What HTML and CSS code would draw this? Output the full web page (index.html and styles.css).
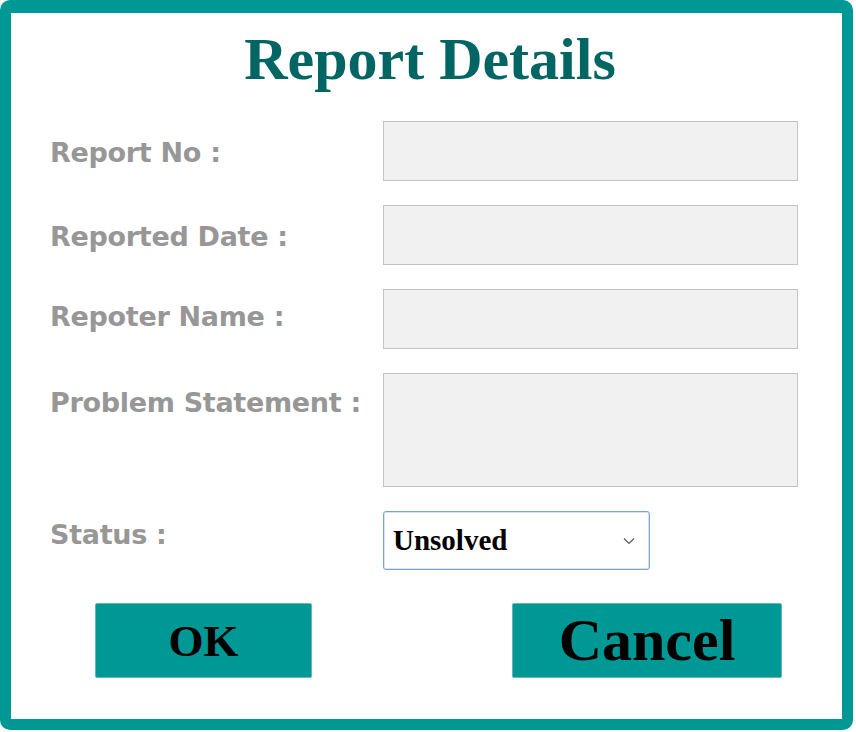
FILE: index.html
```html
<!DOCTYPE html>
<html>
<head>
<meta charset="utf-8">
<link rel="stylesheet" href="styles.css">
</head>
<body>
<div class="frame">
  <h1 class="title">Report Details</h1>
  <div class="form">
    <div class="row">
      <label class="label">Report No :</label>
      <div class="field"></div>
    </div>
    <div class="row">
      <label class="label">Reported Date :</label>
      <div class="field"></div>
    </div>
    <div class="row">
      <label class="label label-tight">Repoter Name :</label>
      <div class="field"></div>
    </div>
    <div class="row">
      <label class="label label-area">Problem Statement :</label>
      <div class="field field-area"></div>
    </div>
    <div class="row">
      <label class="label label-status">Status :</label>
      <div class="select">
        <span class="select-text">Unsolved</span>
        <svg class="chev" width="12" height="8" viewBox="0 0 12 8"><path d="M1 1.5 L6 6.5 L11 1.5" fill="none" stroke="#555" stroke-width="1.1"/></svg>
      </div>
    </div>
  </div>
  <div class="buttons">
    <button class="btn btn-ok">OK</button>
    <button class="btn btn-cancel">Cancel</button>
  </div>
</div>
</body>
</html>
```

FILE: styles.css
```css
html, body {
  margin: 0;
  padding: 0;
  background: #ffffff;
}
.frame {
  box-sizing: border-box;
  width: 853px;
  height: 730px;
  border: 11px solid #009895;
  border-top-width: 13px;
  border-radius: 10px;
  background: #ffffff;
}
.title {
  margin: 0;
  padding: 13px 0 0 7px;
  height: 95px;
  box-sizing: border-box;
  font-family: "Liberation Serif", serif;
  font-weight: bold;
  font-size: 60px;
  line-height: 66px;
  color: #006563;
  text-align: center;
}
.form {
  display: flex;
  flex-direction: column;
  gap: 24px;
  margin-top: 13px;
  padding-left: 39px;
}
.row {
  display: flex;
  align-items: flex-start;
}
.label {
  width: 333px;
  box-sizing: border-box;
  padding-top: 16px;
  font-family: "DejaVu Sans", sans-serif;
  font-weight: bold;
  font-size: 27px;
  color: #979797;
  letter-spacing: -0.3px;
  white-space: nowrap;
}
.label-tight {
  padding-top: 12px;
}
.label-area {
  padding-top: 14px;
}
.label-status {
  padding-top: 8px;
}
.field {
  box-sizing: border-box;
  width: 415px;
  height: 60px;
  background: #f1f1f1;
  border: 1px solid #c3c3c3;
}
.field-area {
  height: 114px;
}
.select {
  box-sizing: border-box;
  width: 267px;
  height: 59px;
  border: 1px solid #7aa2d4;
  box-shadow: inset 0 0 0 1px #d6e3f2;
  border-radius: 3px;
  background: #fff;
  display: flex;
  align-items: center;
  justify-content: space-between;
  padding: 0 14px 0 9px;
}
.select-text {
  font-family: "Liberation Serif", serif;
  font-weight: bold;
  font-size: 29px;
  color: #000;
}
.chev {
  display: block;
}
.buttons {
  display: flex;
  margin-top: 33px;
  padding-left: 84px;
}
.btn {
  box-sizing: border-box;
  height: 75px;
  background: #009895;
  border: 1px solid #5fb8b6;
  border-radius: 2px;
  font-family: "Liberation Serif", serif;
  font-weight: bold;
  color: #000;
  padding: 0;
  cursor: pointer;
}
.btn-ok {
  width: 217px;
  font-size: 45px;
}
.btn-cancel {
  width: 270px;
  margin-left: 200px;
  font-size: 60px;
}
```
